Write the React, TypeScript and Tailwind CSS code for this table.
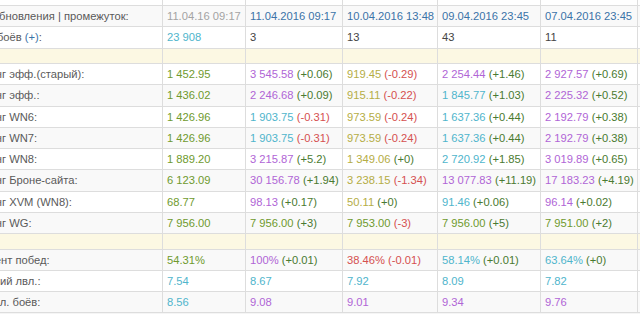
import React from 'react'

type Cell = { v: string; c: string; d?: string }

const OLIVE = 'text-[#6f9a2e]'
const VIOLET = 'text-[#b065d6]'
const TEAL = 'text-[#4fb5cc]'
const KHAKI = 'text-[#b5ad45]'
const RED = 'text-[#d55050]'
const PLAIN = 'text-[#444]'

const o = (v: string, d?: string): Cell => ({ v, c: OLIVE, d })
const vi = (v: string, d?: string): Cell => ({ v, c: VIOLET, d })
const t = (v: string, d?: string): Cell => ({ v, c: TEAL, d })
const k = (v: string, d?: string): Cell => ({ v, c: KHAKI, d })
const r = (v: string, d?: string): Cell => ({ v, c: RED, d })

// shift: nudges the (cut off) label so the visible part lines up
type Row = { label: React.ReactNode; shift?: string; cells: Cell[] } | 'sep'

const rows: Row[] = [
  {
    label: 'Дата обновления | промежуток:',
    cells: [
      { v: '11.04.16 09:17', c: 'text-[#a3a3a3]' },
      { v: '11.04.2016 09:17', c: 'text-[#3b73a8]' },
      { v: '10.04.2016 13:48', c: 'text-[#3b73a8]' },
      { v: '09.04.2016 23:45', c: 'text-[#3b73a8]' },
      { v: '07.04.2016 23:45', c: 'text-[#3b73a8]' },
    ],
  },
  {
    label: (
      <>
        Кол-во боёв <span className="text-[#3b73a8]">(+)</span>:
      </>
    ),
    shift: 'ml-[-6px]',
    cells: [t('23 908'), { v: '3', c: PLAIN }, { v: '13', c: PLAIN }, { v: '43', c: PLAIN }, { v: '11', c: PLAIN }],
  },
  'sep',
  {
    label: 'Рейтинг эфф.(старый):',
    cells: [o('1 452.95'), vi('3 545.58', '+0.06'), k('919.45', '-0.29'), vi('2 254.44', '+1.46'), vi('2 927.57', '+0.69')],
  },
  {
    label: 'Рейтинг эфф.:',
    cells: [o('1 436.02'), vi('2 246.68', '+0.09'), k('915.11', '-0.22'), t('1 845.77', '+1.03'), vi('2 225.32', '+0.52')],
  },
  {
    label: 'Рейтинг WN6:',
    cells: [o('1 426.96'), t('1 903.75', '-0.31'), k('973.59', '-0.24'), t('1 637.36', '+0.44'), vi('2 192.79', '+0.38')],
  },
  {
    label: 'Рейтинг WN7:',
    cells: [o('1 426.96'), t('1 903.75', '-0.31'), k('973.59', '-0.24'), t('1 637.36', '+0.44'), vi('2 192.79', '+0.38')],
  },
  {
    label: 'Рейтинг WN8:',
    cells: [o('1 889.20'), vi('3 215.87', '+5.2'), k('1 349.06', '+0'), t('2 720.92', '+1.85'), vi('3 019.89', '+0.65')],
  },
  {
    label: 'Рейтинг Броне-сайта:',
    cells: [o('6 123.09'), vi('30 156.78', '+1.94'), k('3 238.15', '-1.34'), vi('13 077.83', '+11.19'), vi('17 183.23', '+4.19')],
  },
  {
    label: 'Рейтинг XVM (WN8):',
    cells: [o('68.77'), vi('98.13', '+0.17'), k('50.11', '+0'), t('91.46', '+0.06'), vi('96.14', '+0.02')],
  },
  {
    label: 'Рейтинг WG:',
    cells: [o('7 956.00'), o('7 956.00', '+3'), o('7 953.00', '-3'), o('7 956.00', '+5'), o('7 951.00', '+2')],
  },
  'sep',
  {
    label: 'Процент побед:',
    shift: 'ml-[3px]',
    cells: [o('54.31%'), vi('100%', '+0.01'), r('38.46%', '-0.01'), t('58.14%', '+0.01'), t('63.64%', '+0')],
  },
  {
    label: 'Средний лвл.:',
    shift: 'ml-[2px]',
    cells: [t('7.54'), t('8.67'), t('7.92'), t('8.09'), t('7.82')],
  },
  {
    label: 'Ср. лвл. боёв:',
    shift: 'ml-[2px]',
    cells: [t('8.56'), vi('9.08'), vi('9.01'), vi('9.34'), vi('9.76')],
  },
]

const td = 'border border-[#ddd] px-[4px] py-0 align-middle whitespace-nowrap overflow-hidden'

const Delta = ({ d }: { d: string }) => (
  <span className={d.startsWith('-') ? RED : 'text-[#4a7a30]'}> ({d})</span>
)

export default function App() {
  let stripe = 0
  return (
    <div className="w-[640px] h-[314px] overflow-hidden bg-[#f5f5f5]">
      <table
        className="w-[767px] table-fixed border-collapse ml-[-40px] mt-[-21px] bg-white text-[11.2px] leading-[14px] text-[#5a5a5a]"
        style={{ fontFamily: '"Liberation Sans", Arial, sans-serif' }}
      >
        <colgroup>
          <col className="w-[202px]" />
          <col className="w-[83px]" />
          <col className="w-[97px]" />
          <col className="w-[95px]" />
          <col className="w-[103px]" />
          <col className="w-[97px]" />
          <col className="w-[90px]" />
        </colgroup>
        <thead>
          <tr className="h-[26px]">
            {Array.from({ length: 7 }).map((_, j) => (
              <th key={j} className={td + ' font-normal'}></th>
            ))}
          </tr>
        </thead>
        <tbody>
          {rows.map((row, i) => {
            stripe++
            if (row === 'sep') {
              return (
                <tr key={i} className="h-[15.5px] bg-[#fcf8e3]">
                  {Array.from({ length: 7 }).map((_, j) => (
                    <td key={j} className={td}></td>
                  ))}
                </tr>
              )
            }
            const bg = stripe % 2 === 1 ? 'bg-[#f9f9f9]' : 'bg-white'
            return (
              <tr key={i} className={'h-[21.25px] ' + bg}>
                <td className={td}>
                  <span className={'inline-block ' + (row.shift ?? '')}>{row.label}</span>
                </td>
                {row.cells.map((cell, j) => (
                  <td key={j} className={td}>
                    <span className={cell.c}>{cell.v}</span>
                    {cell.d && <Delta d={cell.d} />}
                  </td>
                ))}
                <td className={td}></td>
              </tr>
            )
          })}
        </tbody>
      </table>
    </div>
  )
}
